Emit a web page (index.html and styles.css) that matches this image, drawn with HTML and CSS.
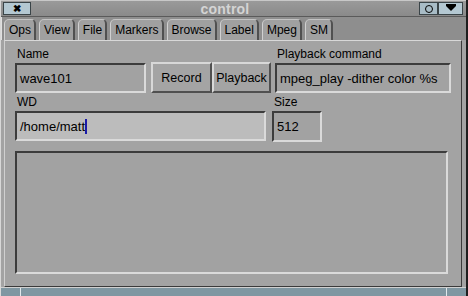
FILE: index.html
```html
<!DOCTYPE html>
<html>
<head>
<meta charset="utf-8">
<link rel="stylesheet" href="styles.css">
</head>
<body>
<div class="window">
  <div class="titlebar">
    <div class="tbtn close">&#x2716;</div>
    <div class="title">control</div>
    <div class="tbtn circle"><span class="ring"></span></div>
    <div class="tbtn menu"><span class="tri"></span></div>
  </div>
  <div class="tabs">
    <div class="tab">Ops</div>
    <div class="tab">View</div>
    <div class="tab">File</div>
    <div class="tab">Markers</div>
    <div class="tab">Browse</div>
    <div class="tab">Label</div>
    <div class="tab">Mpeg</div>
    <div class="tab">SM</div>
  </div>
  <div class="panel">
    <div class="row1">
      <div class="field-group name-group">
        <div class="label">Name</div>
        <div class="entry name">wave101</div>
      </div>
      <div class="buttons">
        <div class="btn rec">Record</div>
        <div class="btn play">Playback</div>
      </div>
      <div class="field-group cmd-group">
        <div class="label">Playback command</div>
        <div class="entry cmd">mpeg_play -dither color %s</div>
      </div>
    </div>
    <div class="row2">
      <div class="field-group wd-group">
        <div class="label">WD</div>
        <div class="entry wd">/home/matt<span class="cursor"></span></div>
      </div>
      <div class="field-group size-group">
        <div class="label">Size</div>
        <div class="entry size">512</div>
      </div>
    </div>
    <div class="textarea"></div>
  </div>
  <div class="statusbar">
    <div class="sb-left"></div>
    <div class="sb-mid"></div>
    <div class="sb-right"></div>
  </div>
</div>
</body>
</html>
```
FILE: styles.css
```css
* { box-sizing: border-box; }
html, body { margin: 0; padding: 0; background: #a2a2a2; }
body { font-family: "Liberation Sans", Arial, sans-serif; font-size: 12px; color: #000; }
.window {
  width: 468px; height: 296px;
  background: #a3a3a3;
  display: flex; flex-direction: column;
  border-right: 2px solid #1e1e1e;
  border-left: 1px solid #d8d8d8;
}
.titlebar {
  height: 17px;
  display: flex; align-items: center;
  background: linear-gradient(#9a9a9a, #8a8a8a);
  border-top: 1px solid #c8c8c8;
  border-bottom: 1px solid #5a5a5a;
  padding: 0 3px 0 2px;
}
.tbtn {
  height: 13px;
  background: #b4c8d2;
  border: 1px solid #3a4448;
  display: flex; align-items: center; justify-content: center;
  font-size: 10px; line-height: 1;
}
.close { width: 28px; color: #000; font-weight: bold; }
.title {
  flex: 1; text-align: center;
  font-weight: bold; font-size: 14px; color: #d4d4d4;
  letter-spacing: 0.2px;
}
.circle { width: 19px; background: #a8bcc6; }
.ring { width: 8px; height: 8px; border: 1px solid #000; border-radius: 50%; }
.menu { width: 25px; }
.tri { width: 0; height: 0; border-left: 5px solid transparent; border-right: 5px solid transparent; border-top: 5px solid #000; box-shadow: 0 -2px 0 #000; }
.tabs {
  height: 23px;
  display: flex; align-items: flex-end;
  padding-left: 2px;
  background: #8e8e8e;
  gap: 3px;
  border-left: 1px solid #e0e0e0;
}
.tab {
  height: 21px;
  padding: 0 3px 0 4px;
  background: #a0a0a0;
  border-top: 1px solid #c4c4c4;
  border-left: 1px solid #d0d0d0;
  border-right: 2px solid #505050;
  border-radius: 5px 5px 0 0;
  display: flex; align-items: center;
  font-size: 12px;
}
.panel {
  flex: 1;
  margin-left: 3px; margin-right: 4px;
  border-top: 1px solid #d8d8d8;
  border-left: 1px solid #d0d0d0;
  border-right: 1px solid #3a3a3a;
  border-bottom: 1px solid #3a3a3a;
  background: #a3a3a3;
  padding: 4px 6px 0 10px;
  display: flex; flex-direction: column;
}
.label { height: 18px; line-height: 18px; font-size: 12px; padding-left: 2px; }
.entry {
  height: 30px;
  border-top: 2px solid #3c3c3c;
  border-left: 2px solid #3c3c3c;
  border-right: 2px solid #dadada;
  border-bottom: 2px solid #dadada;
  background: #a2a2a2;
  display: flex; align-items: center;
  padding-left: 3px;
  font-size: 13px;
}
.row1 { display: flex; align-items: flex-end; }
.name-group { width: 131px; }
.buttons { display: flex; margin-left: 5px; margin-right: 4px; }
.btn {
  height: 31px;
  border-top: 2px solid #d8d8d8;
  border-left: 2px solid #d8d8d8;
  border-right: 2px solid #505050;
  border-bottom: 2px solid #505050;
  display: flex; align-items: center; justify-content: center;
  font-size: 12.5px;
  background: #a4a4a4;
}
.rec { width: 61px; }
.play { width: 59px; }
.cmd-group { flex: 1; margin-right: 4px; }
.row2 { display: flex; }
.wd-group { width: 251px; }
.wd { background: #bcbcbc; }
.cursor { display: inline-block; width: 2px; height: 15px; background: #1a1aa8; }
.size-group { margin-left: 6px; width: 50px; }
.size { height: 31px; }
.textarea {
  margin-top: 9px;
  height: 123px;
  margin-right: 7px;
  border-top: 2px solid #3c3c3c;
  border-left: 2px solid #3c3c3c;
  border-right: 2px solid #dadada;
  border-bottom: 2px solid #dadada;
  background: #a2a2a2;
}
.statusbar {
  height: 9px;
  display: flex;
  background: #7f97a2;
  border-top: 1px solid #d0d0d0;
}
.sb-left { width: 20px; border-right: 1px solid #e0e8ec; }
.sb-mid { flex: 1; }
.sb-right { width: 20px; border-left: 1px solid #e0e8ec; }
```
